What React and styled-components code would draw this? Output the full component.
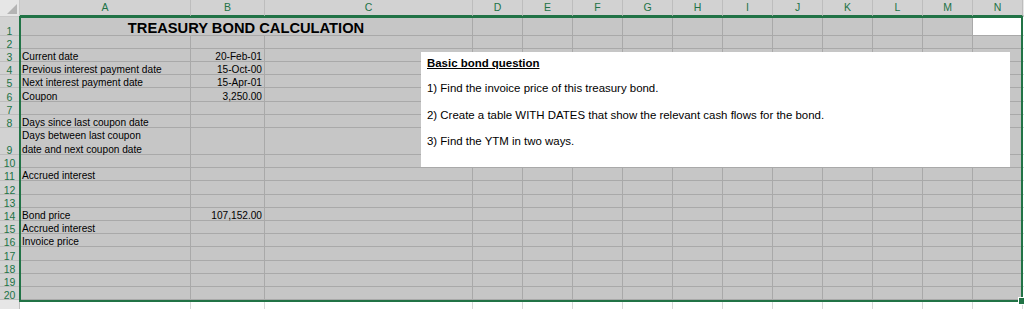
import React from 'react';
import styled, { createGlobalStyle } from 'styled-components';

const GlobalStyle = createGlobalStyle`
  html, body {
    margin: 0;
    padding: 0;
    background: #ffffff;
    overflow: hidden;
  }
`;

const COLS = ['A', 'B', 'C', 'D', 'E', 'F', 'G', 'H', 'I', 'J', 'K', 'L', 'M', 'N'];
const COL_WIDTHS = [20, 171, 74, 208, 50, 50, 50, 50, 50, 50, 50, 50, 50, 50, 50];
const ROW_HEIGHTS = [17, 19, 13, 13, 13, 13, 14, 13, 13, 27, 13, 13, 14, 13, 13, 13, 13, 14, 13, 13, 13, 20];

const DATA = {
  3: { A: 'Current date', B: '20-Feb-01' },
  4: { A: 'Previous interest payment date', B: '15-Oct-00' },
  5: { A: 'Next interest payment date', B: '15-Apr-01' },
  6: { A: 'Coupon', B: '3,250.00' },
  8: { A: 'Days since last coupon date' },
  9: { A: 'Days between last coupon\ndate and next coupon date' },
  11: { A: 'Accrued interest' },
  14: { A: 'Bond price', B: '107,152.00' },
  15: { A: 'Accrued interest' },
  16: { A: 'Invoice price' },
};

const Sheet = styled.div`
  position: relative;
  width: 1024px;
  height: 309px;
  overflow: hidden;
  display: grid;
  grid-template-columns: ${COL_WIDTHS.map(w => `${w}px`).join(' ')} 1fr;
  grid-template-rows: ${ROW_HEIGHTS.map(h => `${h}px`).join(' ')};
  font-family: "Liberation Sans", Arial, sans-serif;
  color: #000;
`;

const Corner = styled.div`
  position: relative;
  box-sizing: border-box;
  background: #e6e6e6;
  border-right: 1px solid #c8c8c8;
  border-bottom: 1px solid #c8c8c8;
  &::after {
    content: '';
    position: absolute;
    right: 2px;
    bottom: 2px;
    border-style: solid;
    border-width: 0 0 10px 10px;
    border-color: transparent transparent #b4b4b4 transparent;
  }
`;

const ColHead = styled.div`
  box-sizing: border-box;
  background: ${p => (p.$sel ? '#d2d2d2' : '#e6e6e6')};
  border-right: 1px solid #bdbdbd;
  border-bottom: 2px solid ${p => (p.$sel ? '#217346' : '#c8c8c8')};
  color: ${p => (p.$sel ? '#217346' : '#444')};
  font-size: 10.5px;
  line-height: 15px;
  text-align: center;
`;

const RowHead = styled.div`
  box-sizing: border-box;
  background: ${p => (p.$sel ? '#d2d2d2' : '#e6e6e6')};
  border-right: 1px solid #bdbdbd;
  border-bottom: 1px solid ${p => (p.$sel ? '#bdbdbd' : '#d4d4d4')};
  color: ${p => (p.$sel ? '#217346' : '#555')};
  font-size: 10.5px;
  line-height: 12px;
  display: flex;
  align-items: flex-end;
  justify-content: center;
`;

const Cell = styled.div`
  box-sizing: border-box;
  min-width: 0;
  background: ${p => p.$bg};
  border-right: 1px solid ${p => (p.$grey ? '#a9a9a9' : '#d9d9d9')};
  border-bottom: 1px solid ${p => (p.$grey ? '#a9a9a9' : '#d9d9d9')};
  display: flex;
  align-items: flex-end;
  justify-content: ${p => (p.$right ? 'flex-end' : 'flex-start')};
  padding: 0 2px;
  font-size: 10.15px;
  line-height: ${p => (p.$wrap ? '13.5px' : '12px')};
  white-space: pre;
`;

const Value = styled.span`
  display: block;
  margin-bottom: -2px;
`;

const TitleCell = styled(Cell)`
  grid-column: span 3;
  justify-content: center;
  font-size: 14.7px;
  font-weight: bold;
  line-height: 17px;
`;

const Selection = styled.div`
  position: absolute;
  left: 19px;
  top: 16px;
  width: 1004px;
  height: 286px;
  box-sizing: border-box;
  border: 2px solid #217346;
  pointer-events: none;
`;

const FillHandle = styled.div`
  position: absolute;
  right: -5px;
  bottom: -5px;
  width: 6px;
  height: 6px;
  background: #217346;
  border: 1px solid #ffffff;
`;

const TextBox = styled.div`
  position: absolute;
  left: 421px;
  top: 52px;
  width: 589px;
  height: 115px;
  box-sizing: border-box;
  background: #ffffff;
  padding: 4px 6px;
  display: flex;
  flex-direction: column;
  gap: 12.5px;
  font-size: 11.45px;
  line-height: 14px;
`;

const BoxHeading = styled.div`
  font-weight: bold;
  text-decoration: underline;
  margin-bottom: -1.5px;
`;

const BoxLine = styled.div``;

function cellBg(r, c) {
  if (r > 20) return '#ffffff';
  if (r === 1 && c === 'N') return '#ffffff';
  return '#c6c6c6';
}

export default function App() {
  const cells = [];
  cells.push(<Corner key="corner" />);
  COLS.forEach(c => cells.push(<ColHead key={`h${c}`} $sel>{c}</ColHead>));
  cells.push(<ColHead key="hx" />);

  for (let r = 1; r <= 21; r++) {
    const sel = r <= 20;
    cells.push(
      <RowHead key={`r${r}`} $sel={sel}>
        <Value>{r}</Value>
      </RowHead>
    );
    COLS.forEach(c => {
      if (r === 1 && (c === 'B' || c === 'C')) return;
      const bg = cellBg(r, c);
      const grey = bg !== '#ffffff' || (r === 1 && c === 'N');
      if (r === 1 && c === 'A') {
        cells.push(
          <TitleCell key="title" $bg={bg} $grey>
            <Value>TREASURY BOND CALCULATION</Value>
          </TitleCell>
        );
        return;
      }
      const v = (DATA[r] || {})[c] || '';
      cells.push(
        <Cell key={`${c}${r}`} $bg={bg} $grey={grey} $right={c === 'B'} $wrap={v.includes('\n')}>
          {v && <Value>{v}</Value>}
        </Cell>
      );
    });
    cells.push(<Cell key={`x${r}`} $bg="#ffffff" />);
  }

  return (
    <>
      <GlobalStyle />
      <Sheet>
        {cells}
        <TextBox>
          <BoxHeading>Basic bond question</BoxHeading>
          <BoxLine>1) Find the invoice price of this treasury bond.</BoxLine>
          <BoxLine>2) Create a table WITH DATES that show the relevant cash flows for the bond.</BoxLine>
          <BoxLine>3) Find the YTM in two ways.</BoxLine>
        </TextBox>
        <Selection>
          <FillHandle />
        </Selection>
      </Sheet>
    </>
  );
}
